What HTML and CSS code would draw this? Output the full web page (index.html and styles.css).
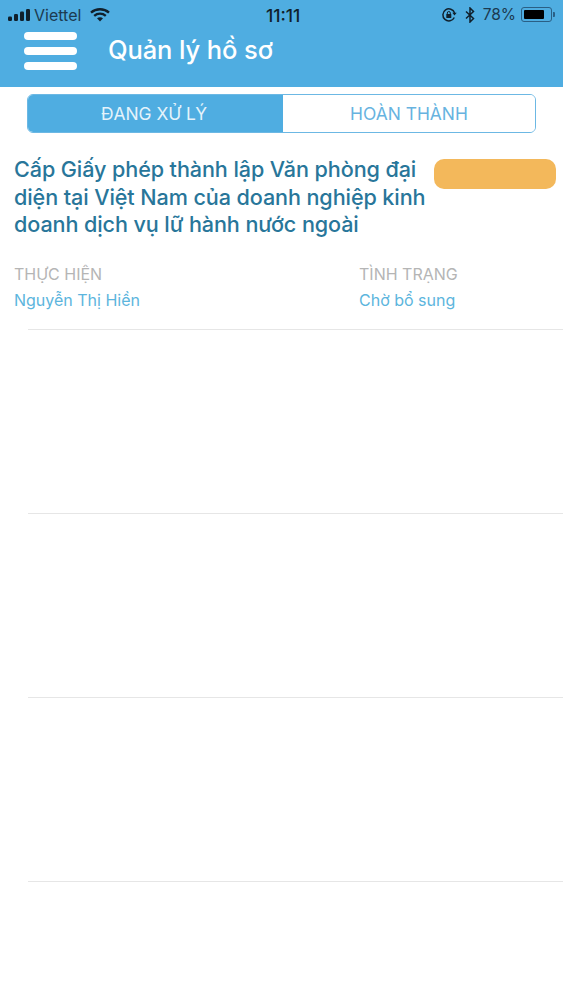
FILE: index.html
```html
<!DOCTYPE html>
<html lang="vi">
<head>
<meta charset="utf-8">
<title>Quản lý hồ sơ</title>
<link rel="stylesheet" href="styles.css">
</head>
<body>
<header class="header">
  <div class="status">
    <div class="status-left">
      <svg class="signal" viewBox="0 0 22 12" width="22" height="12"><rect x="0" y="7.500" width="4" height="4.500" rx="1.200"/><rect x="6" y="5" width="4" height="7" rx="1.200"/><rect x="12" y="2.500" width="4" height="9.500" rx="1.200"/><rect x="18" y="0" width="4" height="12" rx="1.200"/></svg>
      <span class="carrier">Viettel</span>
      <svg class="wifi" viewBox="0 0 20 14" width="20" height="14"><path d="M1 4.600C6 .2 14 .2 19 4.600" fill="none" stroke="#10202c" stroke-width="2.400"/><path d="M4.200 7.800c3.400-2.900 8.200-2.900 11.600 0" fill="none" stroke="#10202c" stroke-width="2.400"/><path d="M7 10.300c1.800-1.300 4.200-1.300 6 0l-3 3.200z" fill="#10202c"/></svg>
    </div>
    <span class="clock">11:11</span>
    <div class="status-right">
      <svg class="lock" viewBox="0 0 16 16" width="16" height="16"><path d="M13.300 10.500A6 6 0 1 1 13.600 6" fill="none" stroke="#10202c" stroke-width="1.500"/><path d="M11.300 5.800h4.400l-2.200 2.700z" fill="#10202c"/><rect x="5.300" y="7" width="5" height="4" rx=".6" fill="#10202c"/><path d="M6.300 7.500V6a1.500 1.500 0 0 1 3 0v1.500" fill="none" stroke="#10202c"/></svg>
      <svg class="bt" viewBox="0 0 10 16" width="10" height="16"><path d="M1 4.500l7.500 7L5 15V1l3.500 3.500L1 11.500" fill="none" stroke="#10202c" stroke-width="1.500"/></svg>
      <span class="percent">78%</span>
      <div class="battery"><div class="battery-fill"></div></div>
      <div class="battery-cap"></div>
    </div>
  </div>
  <div class="nav">
    <button class="menu" aria-label="Menu"><span></span><span></span><span></span></button>
    <h1 class="title">Quản lý hồ sơ</h1>
  </div>
</header>
<div class="tabs">
  <div class="tab tab-active">ĐANG XỬ LÝ</div>
  <div class="tab">HOÀN THÀNH</div>
</div>
<main class="list">
  <article class="row">
    <div class="row-top">
      <h2 class="row-title">Cấp Giấy phép thành lập Văn phòng đại diện tại Việt Nam của doanh nghiệp kinh doanh dịch vụ lữ hành nước ngoài</h2>
      <div class="badge"></div>
    </div>
    <div class="meta">
      <div class="meta-col meta-person">
        <div class="meta-label">THỰC HIỆN</div>
        <div class="meta-value">Nguyễn Thị Hiền</div>
      </div>
      <div class="meta-col">
        <div class="meta-label">TÌNH TRẠNG</div>
        <div class="meta-value">Chờ bổ sung</div>
      </div>
    </div>
  </article>
  <article class="row"></article>
  <article class="row"></article>
  <article class="row"></article>
</main>
</body>
</html>
```
FILE: styles.css
```css
* { box-sizing: border-box; }
html, body { margin: 0; padding: 0; }
body {
  width: 563px;
  height: 1000px;
  overflow: hidden;
  background: #fff;
  font-family: Inter, "Noto Sans", sans-serif;
}
.header {
  height: 87px;
  background: #4fade1;
}
.status {
  height: 29px;
  display: flex;
  align-items: center;
  justify-content: space-between;
  padding: 0 8px;
  position: relative;
  color: #10202c;
}
.status-left, .status-right { display: flex; align-items: center; }
.signal { fill: #10202c; margin-right: 4px; }
.carrier { font-size: 16px; color: #1c3a50; margin-right: 9px; }
.clock {
  position: absolute;
  left: 266px;
  top: 5px;
  font-size: 17.500px;
  font-weight: 500;
}
.lock { margin-right: 8px; }
.bt { margin-right: 8px; }
.percent { font-size: 15.500px; color: #1c3a50; margin-right: 5px; }
.battery {
  width: 31px;
  height: 15px;
  border: 1px solid #2a5f85;
  border-radius: 3px;
  padding: 2px;
}
.battery-fill { width: 78%; height: 100%; background: #000; border-radius: 1px; }
.battery-cap { width: 2px; height: 5px; background: #2a5f85; margin-left: 1px; border-radius: 0 1px 1px 0; }
.nav {
  display: flex;
  align-items: center;
  height: 44px;
  padding-left: 24px;
}
.menu {
  display: flex;
  flex-direction: column;
  gap: 7px;
  width: 53px;
  padding: 0;
  border: 0;
  background: none;
}
.menu span {
  display: block;
  height: 8px;
  background: #fff;
  border-radius: 4px;
}
.title {
  margin: 0 0 3px 31px;
  font-size: 25.500px;
  font-weight: 500;
  color: #fff;
  letter-spacing: -0.1px;
}
.tabs {
  display: flex;
  width: 509px;
  height: 39px;
  margin: 7px 0 0 27px;
  border: 1.500px solid #6cb8e4;
  border-radius: 6px;
  overflow: hidden;
}
.tab {
  flex: 1;
  display: flex;
  align-items: center;
  justify-content: center;
  font-size: 17.400px;
  color: #67b3df;
  background: #fff;
}
.tab-active {
  background: #4fade1;
  color: #e4f3fb;
  padding-right: 3px;
}
.list { margin-top: 13px; }
.row {
  height: 184px;
  position: relative;
  padding: 10px 7px 0 14px;
}
.row::after {
  content: "";
  position: absolute;
  left: 28px;
  right: 0;
  bottom: 0;
  height: 1px;
  background: #e6e6e6;
}
.row-top { display: flex; align-items: flex-start; justify-content: space-between; }
.row-title {
  margin: 0;
  width: 416px;
  font-size: 21.600px;
  font-weight: 500;
  line-height: 27.700px;
  color: #28769a;
  letter-spacing: -0.1px;
}
.badge {
  width: 122px;
  height: 30px;
  margin-top: 3px;
  background: #f3b85b;
  border-radius: 10px;
}
.meta { display: flex; margin-top: 25px; }
.meta-person { width: 345px; }
.meta-label { font-size: 16px; color: #b5b5b5; line-height: 20px; }
.meta-value { font-size: 16px; color: #5cb5dd; line-height: 20px; margin-top: 6px; }
```
